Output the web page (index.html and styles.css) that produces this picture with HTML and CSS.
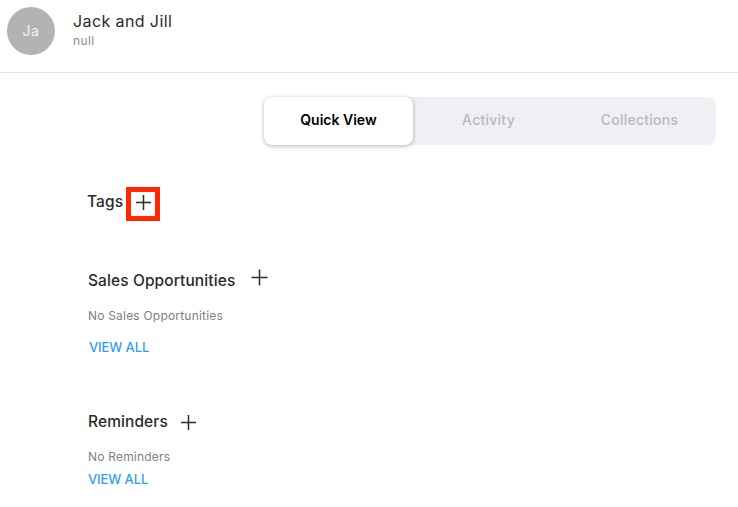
FILE: index.html
```html
<!DOCTYPE html>
<html>
<head>
    <title>Jack and Jill</title>
    <link rel="stylesheet" href="styles.css">
</head>
<body>
    <div class="header">
        <div class="avatar">Ja</div>
        <div class="header-text">
            <div class="name">Jack and Jill</div>
            <div class="sub">null</div>
        </div>
    </div>

    <div class="tabs">
        <div class="tab active">Quick View</div>
        <div class="tab">Activity</div>
        <div class="tab">Collections</div>
    </div>

    <div class="section-tags">
        <div class="title-row">
            <span class="title tags-title">Tags</span>
            <span class="add-box">
                <svg class="plus" width="17" height="17" viewBox="0 0 17 17"><path d="M8.5 1v15M1 8.5h15"/></svg>
            </span>
        </div>
    </div>

    <div class="section-sales">
        <div class="title-row gap-sales">
            <span class="title">Sales Opportunities</span>
            <svg class="plus raised" width="17" height="17" viewBox="0 0 17 17"><path d="M8.5 .5v16M.5 8.5h16"/></svg>
        </div>
        <div class="empty">No Sales Opportunities</div>
        <a class="view-all">VIEW ALL</a>
    </div>

    <div class="section-reminders">
        <div class="title-row gap-reminders">
            <span class="title">Reminders</span>
            <svg class="plus" width="17" height="17" viewBox="0 0 17 17"><path d="M8.5 1v15M1 8.5h15"/></svg>
        </div>
        <div class="empty">No Reminders</div>
        <a class="view-all tight">VIEW ALL</a>
    </div>
</body>
</html>
```

FILE: styles.css
```css
body { margin: 0; font-family: Inter, "Noto Sans", sans-serif; color: #2b2b2b; background: #fff; overflow: hidden; }

.header { display: flex; align-items: flex-start; height: 73px; padding: 7px 0 0 7px; box-sizing: border-box; border-bottom: 1px solid #e6e6e6; }
.avatar { width: 48px; height: 48px; padding-bottom: 2px; box-sizing: border-box; border-radius: 50%; background: #b3b3b3; color: #f4f4f4; font-size: 14px; letter-spacing: 0.5px; display: flex; align-items: center; justify-content: center; }
.header-text { margin-left: 18px; padding-top: 4px; }
.name { font-size: 16px; line-height: 20px; letter-spacing: 0.4px; }
.sub { font-size: 12px; line-height: 16px; margin-top: 2px; color: #8a8a8a; letter-spacing: 0.4px; }

.tabs { display: flex; width: 452px; height: 48px; margin: 24px 0 0 264px; background: #eff0f4; border-radius: 8px; }
.tab { display: flex; align-items: center; justify-content: center; width: 151px; padding-bottom: 4px; box-sizing: border-box; font-size: 14px; font-weight: 500; letter-spacing: 0.25px; color: #b9b9b9; }
.tab.active { width: 149px; background: #fff; color: #000; font-weight: 600; letter-spacing: 0; border-radius: 8px; box-shadow: 0 1px 4px rgba(0, 0, 0, 0.3); }

.title-row { display: flex; align-items: center; }
.title { font-size: 15.5px; font-weight: 450; line-height: 20px; letter-spacing: 0.1px; }
.tags-title { margin-bottom: 5px; }
.plus { fill: none; stroke: #2b2b2b; stroke-width: 1.5; }
.raised { margin-top: -8px; }

.section-tags { margin: 42px 0 0 87px; }
.add-box { display: flex; align-items: center; justify-content: center; width: 34px; height: 34px; padding-bottom: 4px; box-sizing: border-box; border: 5px solid #ff2600; margin-left: 3px; }

.section-sales { margin: 50px 0 0 88px; }
.gap-sales { gap: 16px; }
.gap-reminders { gap: 12px; }
.empty { font-size: 12px; line-height: 16px; margin-top: 17px; color: #808080; letter-spacing: 0.2px; }
.view-all { display: block; margin: 14px 0 0 1px; font-size: 13px; font-weight: 500; line-height: 18px; letter-spacing: -0.1px; color: #2f9ff2; }

.section-reminders { margin: 56px 0 0 88px; }
.view-all.tight { margin: 5px 0 0; }
```
